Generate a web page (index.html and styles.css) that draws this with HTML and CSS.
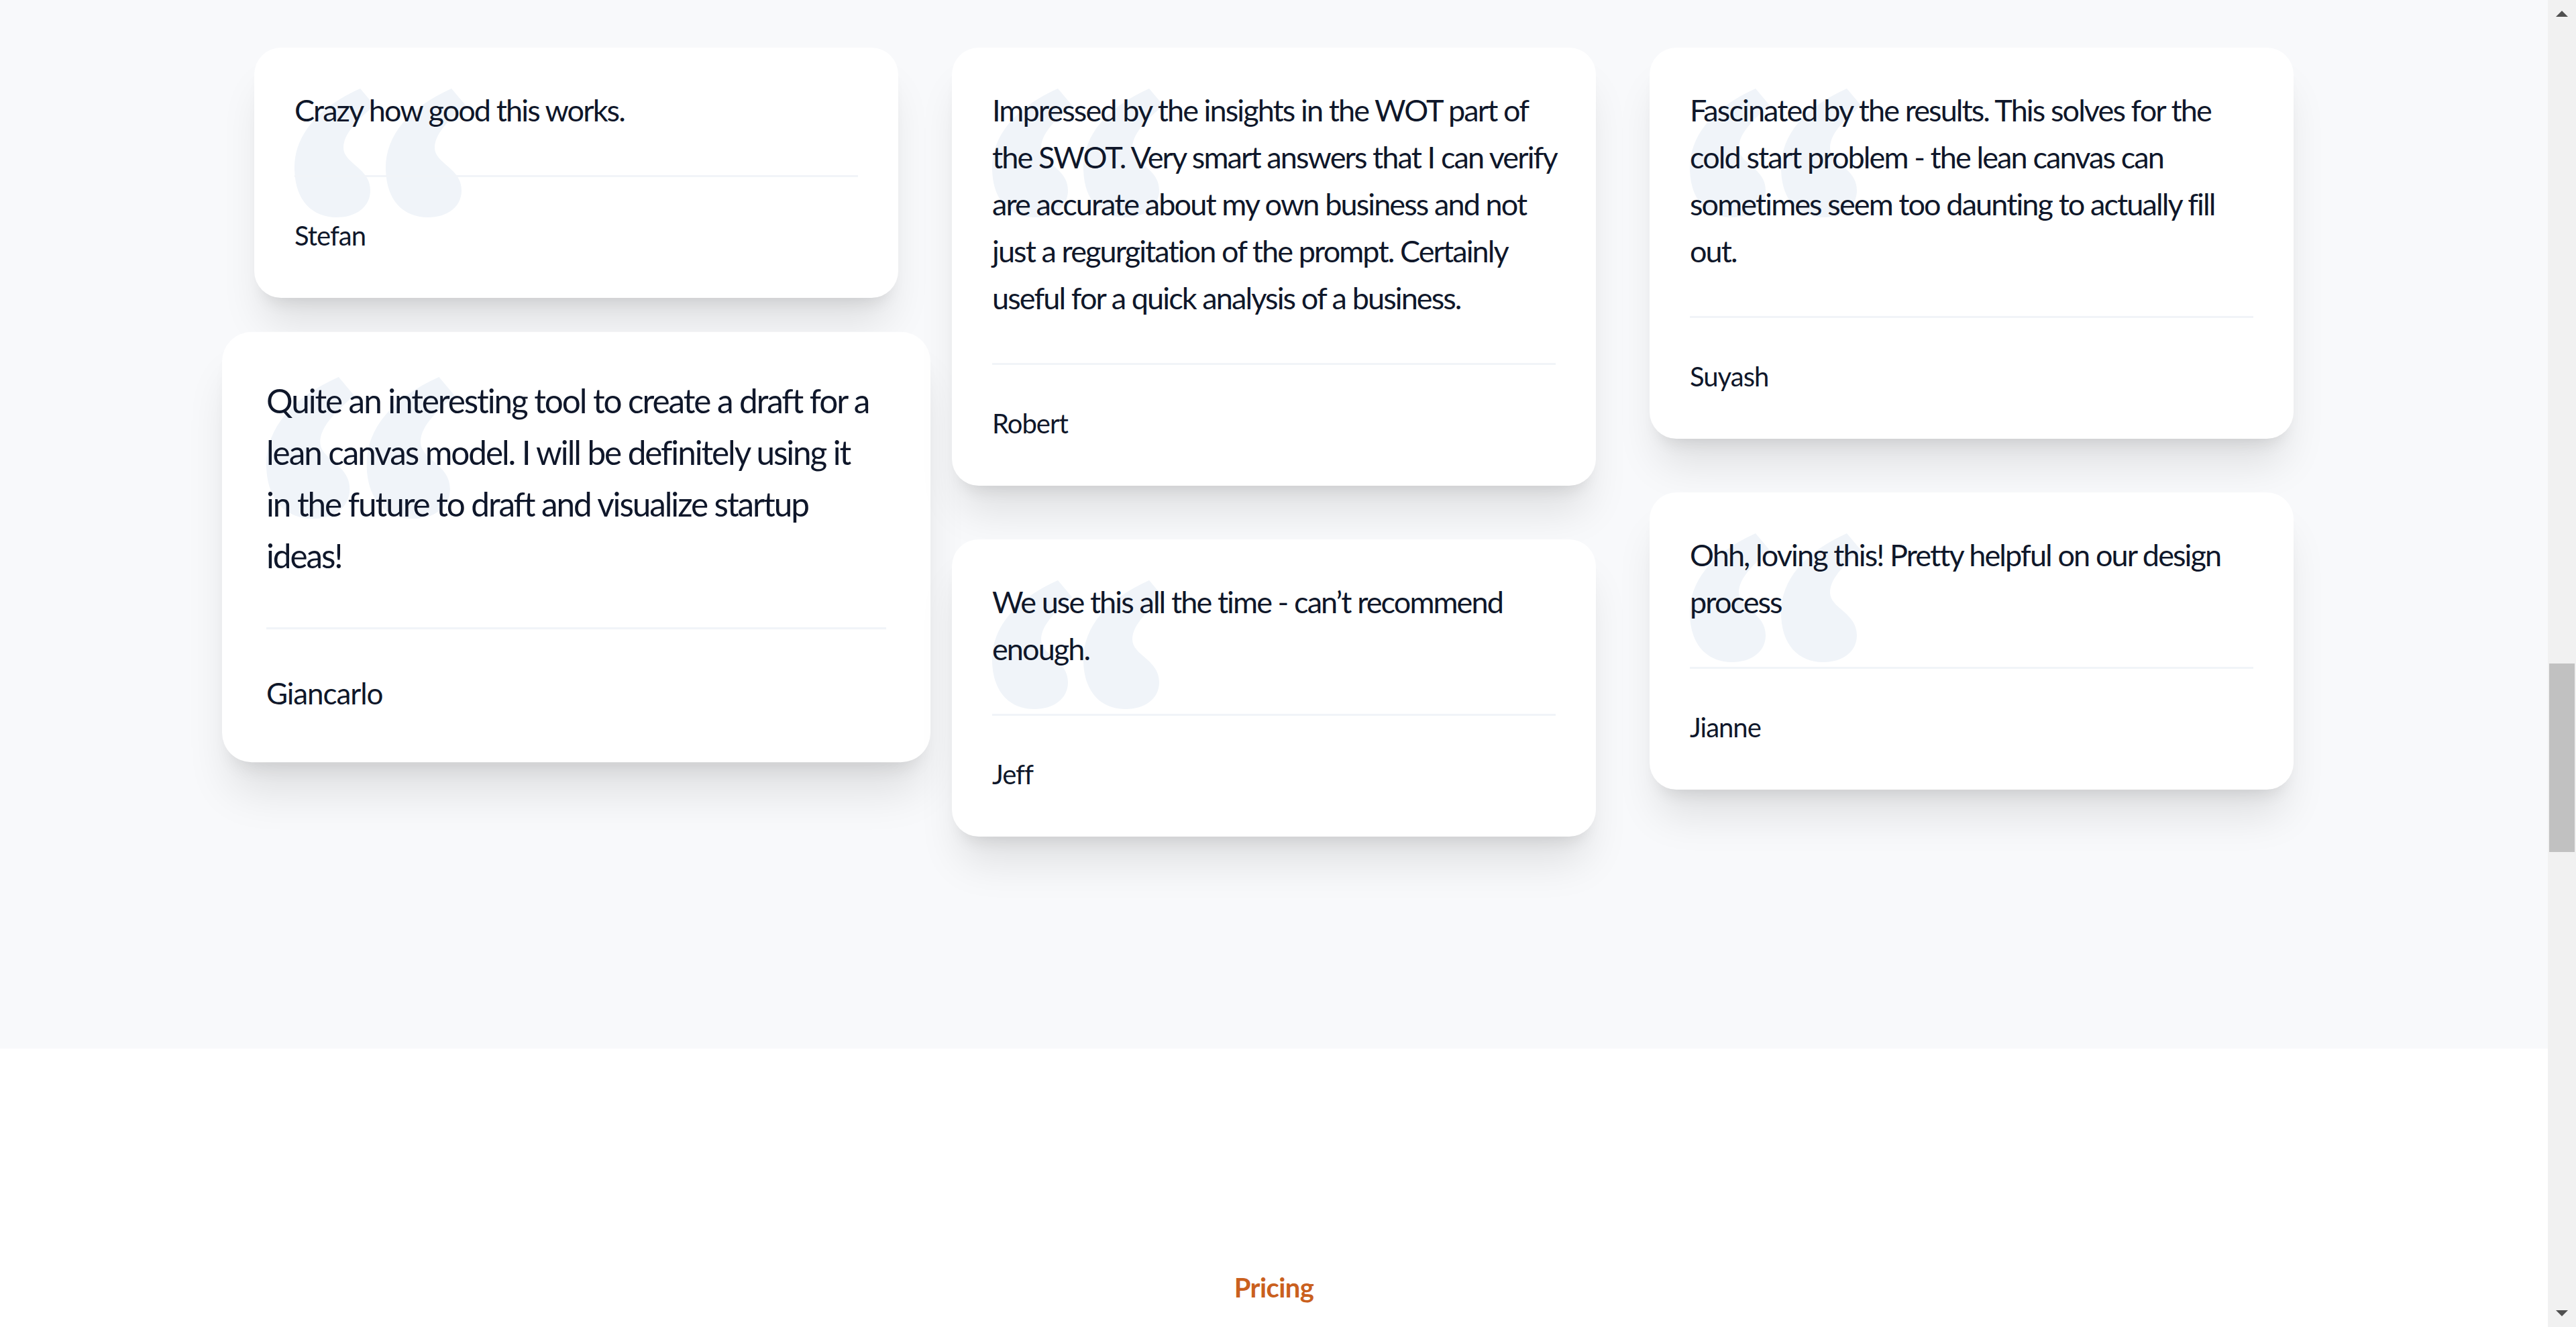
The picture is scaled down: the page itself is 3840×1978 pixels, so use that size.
FILE: index.html
```html
<!DOCTYPE html>
<html lang="en">
<head>
<meta charset="utf-8">
<title>Testimonials</title>
<link rel="stylesheet" href="styles.css">
</head>
<body>
<div class="viewport">
  <main class="page">
    <section class="testimonials">
      <div class="container">
        <div class="column">
          <article class="card">
            <svg class="quote" viewBox="0 0 256 193" aria-hidden="true"><path d="M98 0 L119 25 C100 42 73 65 73 88 C73 112 113 118 113 152 C113 176 92 192 63 192 C25 192 0 165 0 118 C0 70 35 28 98 0 Z"/><path transform="translate(136 0)" d="M98 0 L119 25 C100 42 73 65 73 88 C73 112 113 118 113 152 C113 176 92 192 63 192 C25 192 0 165 0 118 C0 70 35 28 98 0 Z"/></svg>
            <p class="text">Crazy how good this works.</p>
            <div class="author">Stefan</div>
          </article>
          <article class="card card-hover">
            <svg class="quote" viewBox="0 0 256 193" aria-hidden="true"><path d="M98 0 L119 25 C100 42 73 65 73 88 C73 112 113 118 113 152 C113 176 92 192 63 192 C25 192 0 165 0 118 C0 70 35 28 98 0 Z"/><path transform="translate(136 0)" d="M98 0 L119 25 C100 42 73 65 73 88 C73 112 113 118 113 152 C113 176 92 192 63 192 C25 192 0 165 0 118 C0 70 35 28 98 0 Z"/></svg>
            <p class="text">Quite an interesting tool to create a draft for a<br>lean canvas model. I will be definitely using it<br>in the future to draft and visualize startup<br>ideas!</p>
            <div class="author">Giancarlo</div>
          </article>
        </div>
        <div class="column">
          <article class="card">
            <svg class="quote" viewBox="0 0 256 193" aria-hidden="true"><path d="M98 0 L119 25 C100 42 73 65 73 88 C73 112 113 118 113 152 C113 176 92 192 63 192 C25 192 0 165 0 118 C0 70 35 28 98 0 Z"/><path transform="translate(136 0)" d="M98 0 L119 25 C100 42 73 65 73 88 C73 112 113 118 113 152 C113 176 92 192 63 192 C25 192 0 165 0 118 C0 70 35 28 98 0 Z"/></svg>
            <p class="text">Impressed by the insights in the WOT part of<br>the SWOT. Very smart answers that I can verify<br>are accurate about my own business and not<br>just a regurgitation of the prompt. Certainly<br>useful for a quick analysis of a business.</p>
            <div class="author">Robert</div>
          </article>
          <article class="card">
            <svg class="quote" viewBox="0 0 256 193" aria-hidden="true"><path d="M98 0 L119 25 C100 42 73 65 73 88 C73 112 113 118 113 152 C113 176 92 192 63 192 C25 192 0 165 0 118 C0 70 35 28 98 0 Z"/><path transform="translate(136 0)" d="M98 0 L119 25 C100 42 73 65 73 88 C73 112 113 118 113 152 C113 176 92 192 63 192 C25 192 0 165 0 118 C0 70 35 28 98 0 Z"/></svg>
            <p class="text">We use this all the time - can’t recommend<br>enough.</p>
            <div class="author">Jeff</div>
          </article>
        </div>
        <div class="column">
          <article class="card">
            <svg class="quote" viewBox="0 0 256 193" aria-hidden="true"><path d="M98 0 L119 25 C100 42 73 65 73 88 C73 112 113 118 113 152 C113 176 92 192 63 192 C25 192 0 165 0 118 C0 70 35 28 98 0 Z"/><path transform="translate(136 0)" d="M98 0 L119 25 C100 42 73 65 73 88 C73 112 113 118 113 152 C113 176 92 192 63 192 C25 192 0 165 0 118 C0 70 35 28 98 0 Z"/></svg>
            <p class="text">Fascinated by the results. This solves for the<br>cold start problem - the lean canvas can<br>sometimes seem too daunting to actually fill<br>out.</p>
            <div class="author">Suyash</div>
          </article>
          <article class="card">
            <svg class="quote" viewBox="0 0 256 193" aria-hidden="true"><path d="M98 0 L119 25 C100 42 73 65 73 88 C73 112 113 118 113 152 C113 176 92 192 63 192 C25 192 0 165 0 118 C0 70 35 28 98 0 Z"/><path transform="translate(136 0)" d="M98 0 L119 25 C100 42 73 65 73 88 C73 112 113 118 113 152 C113 176 92 192 63 192 C25 192 0 165 0 118 C0 70 35 28 98 0 Z"/></svg>
            <p class="text">Ohh, loving this! Pretty helpful on our design<br>process</p>
            <div class="author">Jianne</div>
          </article>
        </div>
      </div>
    </section>
    <section class="pricing">
      <h2 class="eyebrow">Pricing</h2>
    </section>
  </main>
  <div class="scrollbar" aria-hidden="true">
    <div class="sb-button">
      <svg viewBox="0 0 42 42"><polygon points="12,25 21,16 30,25" /></svg>
    </div>
    <div class="sb-track">
      <div class="sb-thumb"></div>
    </div>
    <div class="sb-button">
      <svg viewBox="0 0 42 42"><polygon points="12,17 30,17 21,26" /></svg>
    </div>
  </div>
</div>
</body>
</html>
```
FILE: styles.css
```css
html, body {
  margin: 0;
  padding: 0;
  height: 1978px;
  overflow: hidden;
  background: #ffffff;
}

body {
  font-family: "Lato", "Liberation Sans", sans-serif;
  color: #0f172a;
}

.viewport {
  display: flex;
  height: 1978px;
}

.page {
  flex: 1;
  min-width: 0;
  display: flex;
  flex-direction: column;
}

.testimonials {
  box-sizing: border-box;
  height: 1563px;
  padding-top: 71px;
  background: #f8f9fb;
}

.container {
  width: 3040px;
  margin: 0 auto;
  display: grid;
  grid-template-columns: repeat(3, 960px);
  column-gap: 80px;
  align-items: start;
}

.column {
  display: flex;
  flex-direction: column;
  gap: 80px;
}

.card {
  position: relative;
  background: #ffffff;
  border-radius: 40px;
  padding: 58px 60px 63px;
  box-shadow: 0 50px 62px -12px rgba(0, 0, 0, 0.1), 0 20px 25px -15px rgba(0, 0, 0, 0.1);
}

.card-hover {
  transform: scale(1.1);
  box-shadow: 0 50px 62px -12px rgba(0, 0, 0, 0.11), 0 20px 25px -15px rgba(0, 0, 0, 0.1);
}

.quote {
  position: absolute;
  top: 61px;
  left: 60px;
  width: 256px;
  height: 193px;
  fill: #f0f4f9;
}

.text {
  position: relative;
  margin: 0 0 62px;
  font-size: 45px;
  line-height: 70px;
  letter-spacing: -1.9px;
  white-space: nowrap;
  font-weight: 400;
}

.author {
  position: relative;
  border-top: 3px solid #f1f4f8;
  padding-top: 57px;
  font-size: 40px;
  line-height: 60px;
  letter-spacing: -1px;
}

.pricing {
  flex: 1;
  background: #ffffff;
  padding-top: 326px;
  text-align: center;
}

.eyebrow {
  margin: 0;
  font-size: 40px;
  line-height: 60px;
  font-weight: 700;
  letter-spacing: -0.6px;
  color: #ca601e;
}

.scrollbar {
  width: 42px;
  flex: none;
  display: flex;
  flex-direction: column;
  background: #f1f1f1;
}

.sb-button {
  height: 42px;
  flex: none;
}

.sb-button svg {
  display: block;
  width: 42px;
  height: 42px;
  fill: #505050;
}

.sb-track {
  flex: 1;
}

.sb-thumb {
  margin-top: 947px;
  margin-left: 2px;
  width: 38px;
  height: 281px;
  background: #c1c1c1;
}
```
